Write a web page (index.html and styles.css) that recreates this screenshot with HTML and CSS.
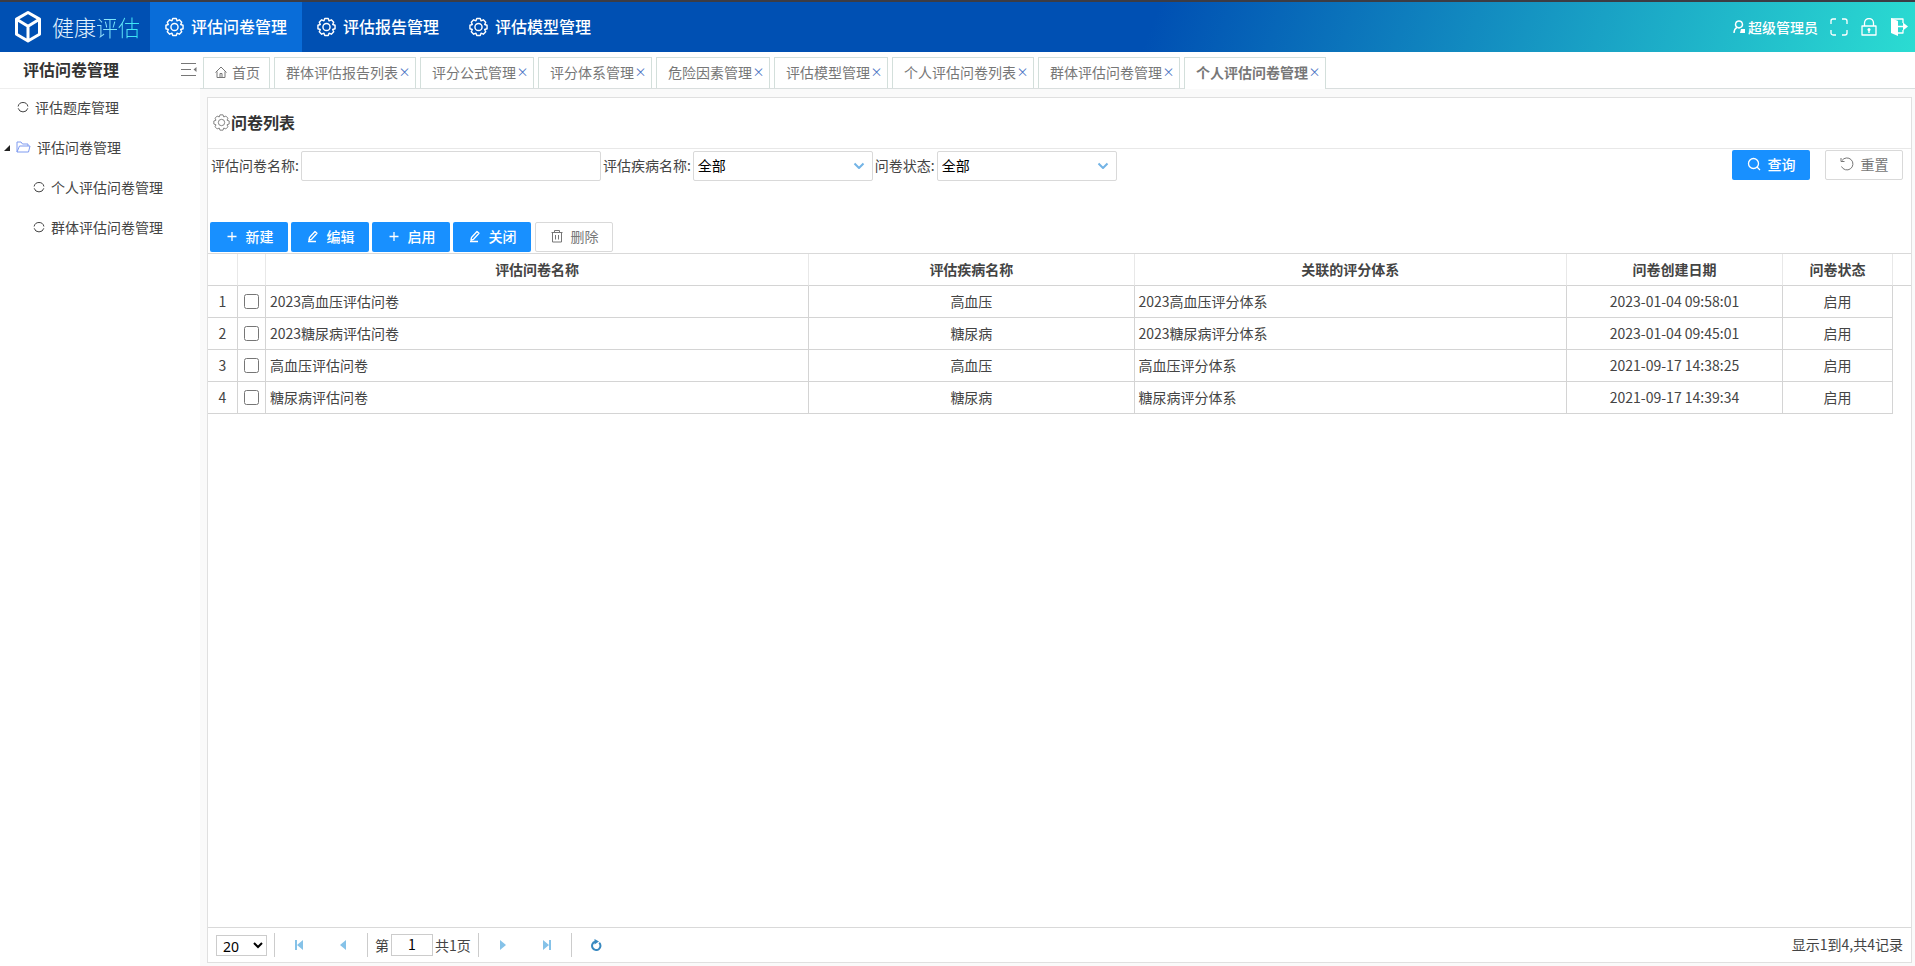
FILE: index.html
```html
<!DOCTYPE html>
<html lang="zh-CN">
<head>
<meta charset="utf-8">
<title>健康评估</title>
<link rel="stylesheet" href="styles.css">
</head>
<body>
<svg class="sprite" aria-hidden="true">
  <symbol id="gear" viewBox="0 0 24 24"><path d="M9.800 1.200h4.400L15.200 4.200 18.100 2.900 21.100 5.900 19.800 8.800 22.800 9.800v4.400L19.800 15.200 21.100 18.100 18.100 21.100 15.200 19.800 14.200 22.800H9.800L8.800 19.800 5.900 21.100 2.900 18.100 4.200 15.200 1.200 14.200V9.800L4.200 8.800 2.900 5.900 5.900 2.900 8.800 4.200z"/><circle cx="12" cy="12" r="4.500"/></symbol>
  <symbol id="plus" viewBox="0 0 14 14"><path d="M7 3v9M2.500 7.500h9"/></symbol>
  <symbol id="edit" viewBox="0 0 14 14"><path d="M3.500 8.500L9 2.500l2 1.800-5.500 6-2.500.7zM2 12.500h8"/></symbol>
  <symbol id="ring" viewBox="0 0 14 14"><path d="M2.100 6.500A5 5 0 0 1 11.900 6.500M11.800 8.300A5 5 0 0 1 2.200 8.300"/></symbol>
</svg>

<header class="topbar">
  <div class="brand">
    <svg class="brand-mark" viewBox="0 0 28 36"><path d="M14 4.500l11.500 6.600v15.200L14 33 2.500 26.300V11.100zM3 11.500l11 6.800 11-6.800M14 18v14"/></svg>
    <span class="brand-name">健康<span class="brand-accent">评估</span></span>
  </div>
  <nav class="topnav">
    <a class="topnav-item active" href="#"><svg class="nav-gear"><use href="#gear"/></svg>评估问卷管理</a>
    <a class="topnav-item" href="#"><svg class="nav-gear"><use href="#gear"/></svg>评估报告管理</a>
    <a class="topnav-item" href="#"><svg class="nav-gear"><use href="#gear"/></svg>评估模型管理</a>
  </nav>
  <div class="account">
    <a class="user" href="#"><svg class="user-icon" viewBox="0 0 13 14"><path d="M6 1a3.400 3.400 0 0 1 2 6.200L6 8 4 7.200A3.400 3.400 0 0 1 6 1zM4 7.400C2 8.500 1 10.500 1 13"/><path class="solid" d="M8 9h4v4H7z"/></svg>超级管理员</a>
    <button class="icon-btn" aria-label="全屏"><svg viewBox="0 0 18 18"><path d="M1 6V3a2 2 0 0 1 2-2h3M12 1h3a2 2 0 0 1 2 2v3M17 12v3a2 2 0 0 1-2 2h-3M6 17H3a2 2 0 0 1-2-2v-3"/></svg></button>
    <button class="icon-btn" aria-label="锁定"><svg viewBox="0 0 18 18"><path d="M2 8h14v9H2zM4.500 8V5a4.500 4.500 0 0 1 9 0v3M9 11v4"/><circle class="solid" cx="9" cy="11.500" r="1.500"/></svg></button>
    <button class="icon-btn" aria-label="退出"><svg viewBox="0 0 18 18"><path class="solid" d="M1 0l7 3v15l-7-3z"/><path d="M1 1h12v4M13 12v3H8M8 8.500h8"/><path class="solid" d="M13 4.500l5 4-5 4z"/></svg></button>
  </div>
</header>

<div class="body">
  <aside class="sidebar">
    <div class="side-head"><h2>评估问卷管理</h2>
      <button class="fold" aria-label="收起菜单"><svg viewBox="0 0 16 14"><path d="M0 1.500h15M0 7.500h10M0 13.500h15"/><path class="solid" d="M15.500 5v5L12.500 7.500z"/></svg></button></div>
    <ul class="tree">
      <li><a class="leaf" href="#"><svg class="ring"><use href="#ring"/></svg>评估题库管理</a></li>
      <li><a class="branch" href="#"><svg class="caret" viewBox="0 0 7 7"><path d="M6 1v6H0z"/></svg><svg class="folder" viewBox="0 0 15 12"><path d="M1 11V1h4l1.500 2H12v2M1 11l2.500-6H14l-1.500 6z"/></svg>评估问卷管理</a>
        <ul>
          <li><a class="leaf nested" href="#"><svg class="ring"><use href="#ring"/></svg>个人评估问卷管理</a></li>
          <li><a class="leaf nested" href="#"><svg class="ring"><use href="#ring"/></svg>群体评估问卷管理</a></li>
        </ul>
      </li>
    </ul>
  </aside>

  <main class="main">
    <div class="tabs">
      <div class="tab home"><svg class="home-icon" viewBox="0 0 12 12"><path d="M.5 6.500L6 1l5.500 5.500M2 5.500v6h8v-6M5 11.500V7.500h2v4"/></svg><a href="#">首页</a></div>
      <div class="tab"><a href="#">群体评估报告列表</a><button aria-label="关闭标签">×</button></div>
      <div class="tab"><a href="#">评分公式管理</a><button aria-label="关闭标签">×</button></div>
      <div class="tab"><a href="#">评分体系管理</a><button aria-label="关闭标签">×</button></div>
      <div class="tab"><a href="#">危险因素管理</a><button aria-label="关闭标签">×</button></div>
      <div class="tab"><a href="#">评估模型管理</a><button aria-label="关闭标签">×</button></div>
      <div class="tab"><a href="#">个人评估问卷列表</a><button aria-label="关闭标签">×</button></div>
      <div class="tab"><a href="#">群体评估问卷管理</a><button aria-label="关闭标签">×</button></div>
      <div class="tab current"><a href="#">个人评估问卷管理</a><button aria-label="关闭标签">×</button></div>
    </div>

    <section class="panel">
      <h1 class="panel-title"><svg class="title-gear"><use href="#gear"/></svg>问卷列表</h1>
      <form class="filters">
        <label for="name">评估问卷名称:</label><input id="name" class="name-box" type="text">
        <label for="disease">评估疾病名称:</label><span class="combo"><select id="disease"><option>全部</option></select><svg viewBox="0 0 12 8"><path d="M1.500 1.500L6 6l4.500-4.500"/></svg></span>
        <label for="state">问卷状态:</label><span class="combo"><select id="state"><option>全部</option></select><svg viewBox="0 0 12 8"><path d="M1.500 1.500L6 6l4.500-4.500"/></svg></span>
        <div class="filter-actions">
          <button type="button" class="btn primary"><svg viewBox="0 0 14 14"><circle cx="6.500" cy="6.500" r="5"/><path d="M10 10l3 3"/></svg>查询</button>
          <button type="reset" class="btn plain"><svg viewBox="0 0 14 14"><path d="M2 3.500a6 6 0 1 1-.5 6M1 1v3.500h3.500"/></svg>重置</button>
        </div>
      </form>
      <div class="toolbar">
        <button class="btn primary"><svg><use href="#plus"/></svg>新建</button>
        <button class="btn primary"><svg><use href="#edit"/></svg>编辑</button>
        <button class="btn primary"><svg><use href="#plus"/></svg>启用</button>
        <button class="btn primary"><svg><use href="#edit"/></svg>关闭</button>
        <button class="btn plain"><svg viewBox="0 0 14 14"><path d="M1.500 3.500h11M4.500 3V1.500h5V3M2.500 3.500V13h9V3.500M5.500 6v4.500M8.500 6v4.500"/></svg>删除</button>
      </div>
      <div class="grid">
        <table>
          <colgroup><col class="c-num"><col class="c-check"><col class="c-name"><col class="c-disease"><col class="c-system"><col class="c-date"><col class="c-state"><col class="c-gutter"></colgroup>
          <thead><tr><th></th><th></th><th>评估问卷名称</th><th>评估疾病名称</th><th>关联的评分体系</th><th>问卷创建日期</th><th>问卷状态</th><th class="gutter"></th></tr></thead>
          <tbody>
            <tr><td>1</td><td><input type="checkbox" aria-label="选择第1行"></td><td class="left">2023高血压评估问卷</td><td>高血压</td><td class="left">2023高血压评分体系</td><td>2023-01-04 09:58:01</td><td>启用</td></tr>
            <tr><td>2</td><td><input type="checkbox" aria-label="选择第2行"></td><td class="left">2023糖尿病评估问卷</td><td>糖尿病</td><td class="left">2023糖尿病评分体系</td><td>2023-01-04 09:45:01</td><td>启用</td></tr>
            <tr><td>3</td><td><input type="checkbox" aria-label="选择第3行"></td><td class="left">高血压评估问卷</td><td>高血压</td><td class="left">高血压评分体系</td><td>2021-09-17 14:38:25</td><td>启用</td></tr>
            <tr><td>4</td><td><input type="checkbox" aria-label="选择第4行"></td><td class="left">糖尿病评估问卷</td><td>糖尿病</td><td class="left">糖尿病评分体系</td><td>2021-09-17 14:39:34</td><td>启用</td></tr>
          </tbody>
        </table>
      </div>
      <footer class="pager">
        <select class="page-size" aria-label="每页条数"><option>20</option></select>
        <i class="sep"></i>
        <button class="page-btn" aria-label="首页"><svg viewBox="0 0 12 12"><path d="M2 1h2v10H2zM10 1v10L4 6z"/></svg></button>
        <button class="page-btn" aria-label="上一页"><svg viewBox="0 0 12 12"><path d="M9 1v10L3 6z"/></svg></button>
        <i class="sep"></i>
        <label class="page-no">第<input type="text" value="1">共1页</label>
        <i class="sep"></i>
        <button class="page-btn" aria-label="下一页"><svg viewBox="0 0 12 12"><path d="M3 1v10l6-5z"/></svg></button>
        <button class="page-btn" aria-label="末页"><svg viewBox="0 0 12 12"><path d="M8 1h2v10H8zM2 1v10l6-5z"/></svg></button>
        <i class="sep"></i>
        <button class="page-btn reload" aria-label="刷新"><svg viewBox="0 0 12 12"><path class="arc" d="M9.200 3.800A4.200 4.200 0 1 1 5 2.800"/><path d="M4.500 0l4.500 2.500-4.500 3z"/></svg></button>
        <span class="summary">显示1到4,共4记录</span>
      </footer>
    </section>
  </main>
</div>
</body>
</html>
```
FILE: styles.css
```css
* { box-sizing: border-box; }
body {
  margin: 0;
  height: 100vh;
  display: flex;
  flex-direction: column;
  background: #fff;
  color: #444;
  font: 14px/20px "Noto Sans CJK SC", sans-serif;
}
a { color: inherit; text-decoration: none; }
button, input, select { font: inherit; }
button { border: 0; padding: 0; background: none; cursor: pointer; }
ul { list-style: none; margin: 0; padding: 0; }
svg { fill: none; stroke: currentColor; stroke-linejoin: round; flex: none; }
.solid { fill: currentColor; stroke: none; }
.sprite { position: absolute; width: 0; height: 0; }

.topbar {
  display: flex;
  flex: none;
  height: 52px;
  border-top: 2px solid #3c3c44;
  background: linear-gradient(110deg, #0050b3 60%, #2bdcd2 100%);
  color: #fff;
}
.brand { width: 150px; display: flex; align-items: center; gap: 10px; padding: 0 0 2px 14px; }
.brand-mark { width: 28px; height: 36px; stroke-width: 3; }
.brand-name { font-size: 22px; font-weight: 300; line-height: 32px; white-space: nowrap; color: #e3f3ff; }
.brand-accent { background: linear-gradient(90deg, #a8e4ff, #2ce6f5); background-clip: text; color: transparent; }
.topnav { display: flex; font-size: 16px; font-weight: 500; }
.topnav-item { width: 152px; display: flex; align-items: center; gap: 7px; padding: 0 0 2px 15px; }
.topnav-item.active { background: #096dd9; }
.nav-gear { width: 19px; height: 20px; margin-top: 2px; stroke-width: 1.8; }
.account { margin-left: auto; display: flex; align-items: center; gap: 12px; padding-right: 7px; }
.user { display: flex; align-items: center; gap: 2px; font-weight: 500; }
.user-icon { width: 13px; height: 14px; stroke-width: 1.4; }
.icon-btn { width: 18px; height: 18px; color: #fff; }
.icon-btn svg { display: block; width: 18px; height: 18px; stroke-width: 1.3; }

.body { flex: 1; display: flex; min-height: 0; }
.sidebar { width: 200px; flex: none; }
.side-head { height: 37px; display: flex; align-items: center; justify-content: space-between; padding: 0 3px 2px 23px; border-bottom: 1px solid #eee; }
.side-head h2 { margin: 0; font-size: 16px; font-weight: 700; color: #333; }
.fold { width: 16px; height: 14px; color: #777; }
.fold svg { display: block; width: 16px; height: 14px; }
.tree a { height: 40px; display: flex; align-items: center; padding-bottom: 4px; }
.tree .leaf { padding-left: 16px; gap: 5px; }
.tree .nested { padding-left: 32px; }
.ring { width: 14px; height: 14px; }
.caret { width: 7px; height: 7px; margin: 0 5px 0 4px; fill: #222; stroke: none; }
.folder { width: 15px; height: 12px; margin-right: 6px; color: #7f9bf0; }

.main { flex: 1; min-width: 0; display: flex; flex-direction: column; background: #fafafa; }
.tabs { height: 37px; flex: none; display: flex; align-items: flex-end; gap: 4px; padding-left: 3px; background: #fff; border-bottom: 1px solid #d9dede; }
.tab { height: 31px; display: flex; align-items: center; gap: 3px; padding: 0 7px 2px 11px; border: 1px solid #d3dfdb; border-bottom: 0; color: #777; white-space: nowrap; background: #fff; }
.tab.home { padding-right: 9px; gap: 5px; }
.home-icon { width: 12px; height: 12px; }
.tab button { width: 7px; display: flex; justify-content: center; color: #4a73c4; font-size: 12px; line-height: 20px; }
.tab.current { height: 32px; margin-bottom: -1px; padding-bottom: 3px; font-weight: 700; }
.tab.current button { font-weight: 400; }

.panel { flex: 1; min-height: 0; display: flex; flex-direction: column; margin: 8px 3px 3px 7px; border: 1px solid #e0e0e0; background: #fff; }
.panel-title { height: 51px; flex: none; display: flex; align-items: center; gap: 1px; margin: 0; padding: 0 0 2px 5px; border-bottom: 1px solid #e8e8e8; font-size: 16px; font-weight: 700; color: #333; }
.title-gear { width: 17px; height: 17px; color: #555; }
.filters { display: flex; align-items: center; height: 34px; padding: 0 8px 0 3px; white-space: nowrap; }
.filters label { margin-right: 2px; padding-bottom: 2px; }
.name-box { width: 300px; height: 30px; margin-right: 2px; padding: 0 4px; border: 1px solid #d9d9d9; border-radius: 2px; }
.combo { position: relative; margin-right: 2px; }
.combo select { display: block; width: 180px; height: 30px; padding: 0 4px 2px; border: 1px solid #d9d9d9; border-radius: 2px; background: #fff; color: #000; appearance: none; }
.combo svg { position: absolute; right: 8px; top: 11px; width: 12px; height: 8px; color: #73b4e6; stroke-width: 2; pointer-events: none; }
.filter-actions { margin-left: auto; display: flex; gap: 15px; align-self: flex-start; padding-top: 1px; }
.btn { width: 78px; height: 30px; display: flex; align-items: center; justify-content: center; gap: 7px; padding-bottom: 2px; border-radius: 2px; }
.btn svg { width: 14px; height: 14px; }
.primary { background: #1890ff; color: #fff; font-weight: 500; }
.primary svg { stroke-width: 1.3; }
.plain { border: 1px solid #d9d9d9; color: #777; background: #fff; }
.toolbar { display: flex; gap: 3px; padding: 39px 2px 1px; }
.toolbar .plain { margin-left: 1px; }

.grid { flex: 1; min-height: 0; overflow: hidden; border-top: 1px solid #d9d9d9; }
table { width: 100%; table-layout: fixed; border-collapse: separate; border-spacing: 0; }
.c-num { width: 30px; }
.c-check { width: 28px; }
.c-name { width: 31.9%; }
.c-disease { width: 19.1%; }
.c-system { width: auto; }
.c-date { width: 216px; }
.c-state { width: 110px; }
.c-gutter { width: 18px; }
th, td { height: 32px; padding: 0 4px 2px; border-right: 1px solid #d4d4d4; border-bottom: 1px solid #d4d4d4; text-align: center; line-height: 20px; }
th { border-right-color: #e8e8e8; font-weight: 700; }
.gutter { border-right: 0; }
.left { text-align: left; }
td input { display: block; width: 15px; height: 15px; margin: 2px auto 0; }

.pager { height: 35px; flex: none; display: flex; align-items: center; padding: 0 8px; border-top: 1px solid #d9d9d9; }
.page-size { width: 51px; height: 21px; padding: 0 2px; border: 1px solid #ccc; background: #fff; color: #000; font-family: "Noto Sans", sans-serif; }
.sep { width: 1px; height: 24px; margin: 0 7px; background: #ccc; }
.page-btn { width: 12px; height: 12px; margin: 0 11px; color: #85c2e8; }
.page-btn + .page-btn { margin-left: 21px; }
.page-btn svg { display: block; width: 12px; height: 12px; fill: currentColor; stroke: none; }
.page-btn .arc { fill: none; stroke: currentColor; stroke-width: 2; }
.page-btn.reload { color: #3889c0; }
.page-no { display: flex; align-items: center; gap: 2px; }
.page-no input { width: 42px; height: 22px; padding: 0 0 2px; border: 1px solid #ccc; text-align: center; color: #000; }
.summary { margin-left: auto; padding-bottom: 2px; }
```
